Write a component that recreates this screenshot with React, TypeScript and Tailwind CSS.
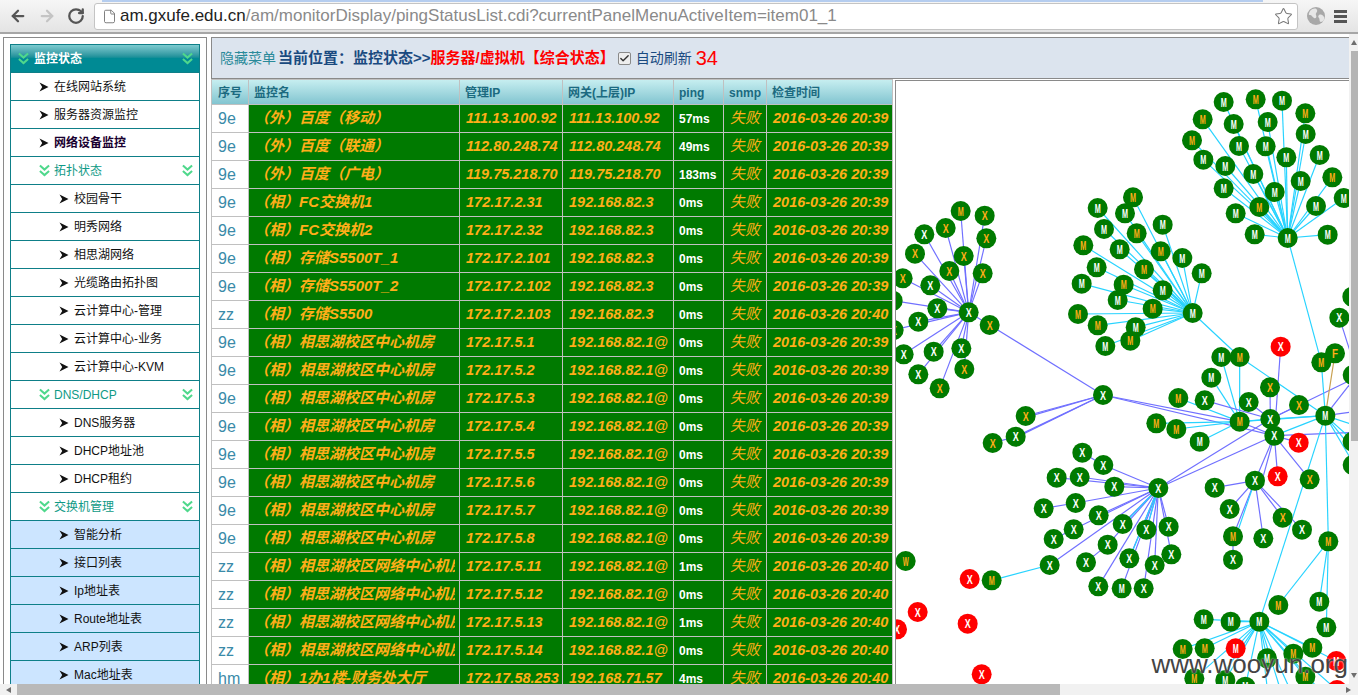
import { ArrowLeft, ArrowRight, RotateCw, File, Star, Check } from "lucide-react";

const FONT = { fontFamily: '"Liberation Sans", "Noto Sans CJK SC", sans-serif' };

type MenuItem = { label: string; level: 0 | 1 | 2; active?: boolean; blue?: boolean };

const menu: MenuItem[] = [
  { label: "在线网站系统", level: 1 },
  { label: "服务器资源监控", level: 1 },
  { label: "网络设备监控", level: 1, active: true },
  { label: "拓扑状态", level: 0 },
  { label: "校园骨干", level: 2 },
  { label: "明秀网络", level: 2 },
  { label: "相思湖网络", level: 2 },
  { label: "光缆路由拓扑图", level: 2 },
  { label: "云计算中心-管理", level: 2 },
  { label: "云计算中心-业务", level: 2 },
  { label: "云计算中心-KVM", level: 2 },
  { label: "DNS/DHCP", level: 0 },
  { label: "DNS服务器", level: 2 },
  { label: "DHCP地址池", level: 2 },
  { label: "DHCP租约", level: 2 },
  { label: "交换机管理", level: 0 },
  { label: "智能分析", level: 2, blue: true },
  { label: "接口列表", level: 2, blue: true },
  { label: "Ip地址表", level: 2, blue: true },
  { label: "Route地址表", level: 2, blue: true },
  { label: "ARP列表", level: 2, blue: true },
  { label: "Mac地址表", level: 2, blue: true },
];

const XS = "（相）相思湖校区中心机房";
const WL = "（相）相思湖校区网络中心机房";
const GW = "192.168.82.1@";
const T39 = "2016-03-26 20:39";
const T40 = "2016-03-26 20:40";

const rows = [
  ["9e", "（外）百度（移动）", "111.13.100.92", "111.13.100.92", "57ms", T39],
  ["9e", "（外）百度（联通）", "112.80.248.74", "112.80.248.74", "49ms", T39],
  ["9e", "（外）百度（广电）", "119.75.218.70", "119.75.218.70", "183ms", T39],
  ["9e", "（相）FC交换机1", "172.17.2.31", "192.168.82.3", "0ms", T39],
  ["9e", "（相）FC交换机2", "172.17.2.32", "192.168.82.3", "0ms", T39],
  ["9e", "（相）存储S5500T_1", "172.17.2.101", "192.168.82.3", "0ms", T39],
  ["9e", "（相）存储S5500T_2", "172.17.2.102", "192.168.82.3", "0ms", T39],
  ["zz", "（相）存储S5500", "172.17.2.103", "192.168.82.3", "0ms", T40],
  ["9e", XS, "172.17.5.1", GW, "0ms", T39],
  ["9e", XS, "172.17.5.2", GW, "0ms", T39],
  ["9e", XS, "172.17.5.3", GW, "0ms", T39],
  ["9e", XS, "172.17.5.4", GW, "0ms", T39],
  ["9e", XS, "172.17.5.5", GW, "0ms", T39],
  ["9e", XS, "172.17.5.6", GW, "0ms", T39],
  ["9e", XS, "172.17.5.7", GW, "0ms", T39],
  ["9e", XS, "172.17.5.8", GW, "0ms", T39],
  ["zz", WL, "172.17.5.11", GW, "1ms", T40],
  ["zz", WL, "172.17.5.12", GW, "0ms", T40],
  ["zz", WL, "172.17.5.13", GW, "1ms", T40],
  ["zz", WL, "172.17.5.14", GW, "0ms", T40],
  ["hm", "（相）1办1楼-财务处大厅", "172.17.58.253", "192.168.71.57", "4ms", T40],
];

const CYAN = "#27d3ff";
const BLUE = "#7070ff";

// graph coordinates are 3x page pixels, origin at page x=890, y=0
type Node = [number, number, string, "w" | "o" | "r"];
const LOW = 1035; // y offset for points read from the lower half

const low = (list: Node[]): Node[] => list.map(([x, y, l, c]) => [x, y + LOW, l, c]);

const hubA: Node = [1190, 714, "M", "w"];
const leavesA: Node[] = [
  [998, 306, "M", "w"], [1094, 298, "M", "o"], [1173, 302, "M", "w"], [1243, 340, "M", "o"],
  [935, 358, "M", "o"], [1028, 372, "M", "w"], [1130, 366, "M", "w"], [1244, 402, "M", "w"],
  [903, 421, "M", "o"], [1044, 438, "M", "w"], [1124, 439, "M", "w"], [1186, 472, "M", "w"],
  [1286, 465, "M", "w"], [937, 479, "M", "w"], [1003, 498, "M", "w"], [1087, 522, "M", "w"],
  [1229, 543, "M", "w"], [1324, 532, "M", "o"], [998, 565, "M", "w"], [1151, 576, "M", "w"],
  [1358, 594, "M", "w"], [1034, 640, "M", "w"], [1105, 621, "M", "o"], [1275, 618, "M", "w"],
  [1091, 703, "M", "w"], [1310, 704, "M", "w"],
];

const hubB: Node = [905, 939, "M", "w"];
const leavesB: Node[] = [
  [726, 592, "M", "o"], [620, 624, "M", "w"], [702, 640, "M", "w"], [639, 687, "M", "w"],
  [737, 700, "M", "o"], [815, 674, "M", "w"], [577, 736, "M", "o"], [686, 748, "M", "w"],
  [809, 754, "M", "o"], [874, 774, "M", "w"], [617, 802, "M", "w"], [759, 808, "M", "o"],
  [932, 820, "M", "w"], [572, 851, "M", "w"], [698, 854, "M", "o"], [815, 871, "M", "w"],
  [680, 900, "M", "w"], [785, 926, "M", "o"], [561, 942, "M", "o"], [620, 976, "M", "o"],
  [734, 982, "M", "w"], [718, 1022, "M", "o"], [643, 1038, "M", "w"],
];

const hubC: Node = [233, 937, "X", "w"];
const leavesC: Node[] = [
  [209, 633, "M", "o"], [281, 647, "X", "o"], [100, 703, "X", "w"], [164, 684, "X", "o"],
  [286, 715, "X", "o"], [72, 761, "X", "o"], [218, 768, "X", "o"], [275, 820, "X", "o"],
  [175, 813, "X", "o"], [35, 835, "X", "o"], [118, 856, "X", "w"], [5, 902, "X", "w"],
  [139, 925, "X", "w"], [82, 965, "X", "w"], [8, 990, "X", "w"], [128, 1055, "X", "w"],
  [211, 1045, "X", "w"], [38, 1063, "X", "w"], [82, 1123, "X", "w"], [220, 1107, "X", "o"],
  [146, 1165, "X", "o"],
];

const hubD: Node = [296, 975, "X", "o"];
const hubE: Node = [636, 150 + LOW, "X", "w"];
const leavesE: Node[] = low([[404, 213, "X", "o"], [374, 275, "X", "w"]]);

const hubG: Node = [802, 429 + LOW, "X", "w"];
const leavesG: Node[] = low([
  [637, 360, "X", "w"], [497, 398, "X", "w"], [566, 396, "X", "w"], [670, 425, "X", "w"],
  [554, 474, "X", "w"], [623, 511, "X", "w"], [695, 537, "X", "w"], [766, 554, "X", "w"],
  [833, 545, "X", "w"], [650, 599, "X", "w"], [715, 640, "X", "w"], [841, 628, "X", "w"],
  [791, 660, "X", "w"], [622, 724, "X", "w"], [692, 730, "M", "w"], [758, 730, "X", "w"],
  [476, 660, "X", "w"], [548, 553, "X", "w"],
]);
const outerG: Node[] = low([
  [574, 323, "X", "w"], [458, 490, "X", "w"], [488, 582, "X", "w"], [585, 652, "X", "w"],
]);

const hubF: Node = [1046, 230 + LOW, "M", "o"];
const leavesF: Node[] = low([
  [1046, 36, "M", "o"], [991, 36, "M", "w"], [961, 98, "M", "w"], [796, 235, "M", "o"],
  [856, 252, "M", "o"], [926, 290, "M", "w"], [862, 159, "M", "o"],
]);

const hubH: Node = [1138, 222 + LOW, "X", "w"];
const hubI: Node = [1150, 272 + LOW, "X", "w"];
const hubJ: Node = [1303, 212 + LOW, "M", "w"];
const hubK: Node = [1092, 407 + LOW, "X", "w"];
const leavesK: Node[] = low([
  [971, 428, "X", "w"], [1016, 492, "X", "w"], [1175, 518, "X", "o"], [1233, 554, "X", "w"],
  [1026, 574, "M", "o"], [1117, 580, "X", "w"],
]);

const hubL: Node = [1312, 589 + LOW, "M", "o"];
const hubM: Node = [1105, 830 + LOW, "M", "w"];
const leavesM: Node[] = low([
  [938, 823, "M", "w"], [1019, 830, "M", "w"], [875, 912, "M", "o"], [941, 910, "M", "o"],
  [1034, 910, "M", "r"], [1128, 940, "M", "w"], [1207, 926, "M", "o"], [1264, 908, "M", "o"],
  [1336, 948, "M", "r"], [910, 1000, "M", "o"], [1003, 1005, "M", "w"], [1063, 1025, "M", "w"],
  [1243, 995, "M", "o"], [1338, 1035, "M", "r"],
]);

const singles: Node[] = low([
  [305, 294, "X", "o"], [302, 706, "M", "o"], [236, 702, "X", "r"], [44, 648, "W", "o"],
  [80, 801, "X", "r"], [18, 853, "X", "r"], [230, 836, "X", "r"], [272, 988, "X", "r"],
  [1169, 5, "X", "r"], [941, 166, "X", "w"], [1073, 171, "X", "w"], [1137, 127, "X", "o"],
  [1224, 180, "X", "o"], [1291, 52, "M", "o"], [1332, 25, "F", "o"], [1223, 293, "X", "r"],
  [1160, 394, "X", "r"], [1256, 403, "X", "o"], [1026, 644, "X", "w"], [1162, 780, "M", "o"],
  [1285, 770, "M", "w"], [1306, 847, "M", "w"], [1345, -82, "X", "w"], [1384, -145, "X", "w"],
  [1385, 90, "X", "w"], [1385, 290, "X", "w"], [1385, 360, "M", "o"],
]);

type Edge = [number, number, number, number, string];

const fan = (hub: Node, leaves: Node[], color: string): Edge[] =>
  leaves.map((n) => [hub[0], hub[1], n[0], n[1], color]);

const pt = (x: number, y: number): Node => [x, y + LOW, "", "w"];

const edges: Edge[] = [
  ...fan(hubA, leavesA, CYAN),
  ...fan(hubB, leavesB, CYAN),
  ...fan(hubC, leavesC, BLUE),
  ...fan(hubC, [hubD], BLUE),
  ...fan(hubE, [hubD, ...leavesE, hubF, hubI], BLUE),
  ...fan(hubE, [pt(374, 278), pt(404, 217)], BLUE),
  ...fan(hubG, [...leavesG, hubH, hubI], BLUE),
  ...fan(hubG, [pt(766, 556), pt(715, 642), pt(695, 540)], CYAN),
  ...fan(hubF, leavesF, CYAN),
  ...fan(hubF, [hubJ, hubH], CYAN),
  ...fan(hubH, [pt(941, 166), pt(1073, 171), pt(1137, 127), pt(1224, 180), hubI], BLUE),
  ...fan(hubH, [hubJ], CYAN),
  ...fan(hubH, [pt(1390, 100)], BLUE),
  ...fan(hubI, [
    pt(1169, 5), pt(1223, 293), pt(1160, 394), pt(1256, 403), pt(1390, 262), hubK, pt(1115, 400), hubF,
  ], BLUE),
  ...fan(hubI, [hubJ], CYAN),
  ...fan(hubJ, [pt(1390, 100), pt(1390, 200)], BLUE),
  ...fan(hubJ, [pt(1291, 52), hubL, hubM, pt(1390, 290), pt(1390, 360), pt(1390, 240), pt(1390, 320)], CYAN),
  ...fan(hubJ, [pt(1332, 25)], "#c8a050"),
  ...fan(hubK, leavesK, BLUE),
  ...fan(hubK, [pt(1035, 574)], CYAN),
  [1026, 574 + LOW, 1026, 644 + LOW, BLUE],
  ...fan(hubL, [pt(1162, 780), pt(1285, 770), pt(1306, 847)], CYAN),
  ...fan(hubM, leavesM, CYAN),
  ...fan(hubM, [pt(960, 1040), pt(1130, 1040), pt(1170, 1040), pt(1200, 1040), pt(1290, 1040)], CYAN),
  [hubB[0], hubB[1], 1046, 36 + LOW, CYAN],
  [hubA[0], hubA[1], 1291, 52 + LOW, CYAN],
  [1046, 36 + LOW, 1303, 212 + LOW, CYAN],
  [374, 275 + LOW, 305, 294 + LOW, BLUE],
  [574, 323 + LOW, 637, 360 + LOW, BLUE],
  [458, 490 + LOW, 554, 474 + LOW, BLUE],
  [488, 582 + LOW, 548, 553 + LOW, BLUE],
  [585, 652 + LOW, 650, 599 + LOW, BLUE],
  [476, 660 + LOW, 302, 706 + LOW, CYAN],
  [1345, -82 + LOW, 1390, 60 + LOW, BLUE],
];

const nodes: Node[] = [
  ...leavesA, hubA, ...leavesB, hubB, ...leavesC, hubC, hubD, hubE, ...leavesE,
  ...outerG, ...leavesG, hubG, ...leavesF, hubF, hubH, hubI, hubJ, ...leavesK, hubK,
  hubL, ...leavesM, hubM, ...singles,
];

function TopologyGraph() {
  return (
    <svg viewBox="15 243 1362 1812" width="454" height="604" className="block" style={FONT}>
      {edges.map(([x1, y1, x2, y2, color], i) => (
        <line key={i} x1={x1} y1={y1} x2={x2} y2={y2} stroke={color} strokeWidth={3.5} />
      ))}
      {nodes.map(([x, y, label, tone], i) => (
        <g key={i}>
          <circle cx={x} cy={y} r={30} fill={tone === "r" ? "#ff0000" : "#007a00"} />
          <text
            x={x}
            y={y + 14}
            textAnchor="middle"
            fontSize={38}
            fontWeight={700}
            textLength={18}
            lengthAdjust="spacingAndGlyphs"
            fill={tone === "o" ? "#ffae1a" : "#ffffff"}
          >
            {label}
          </text>
        </g>
      ))}
    </svg>
  );
}

function DoubleChevron({ className }: { className: string }) {
  return (
    <svg viewBox="0 0 12 14" className={className} fill="none" stroke="#4fd88c" strokeWidth={2.2}>
      <path d="M1 1.5 6 6l5-4.5M1 7.5 6 12l5-4.5" />
    </svg>
  );
}

function Pointer() {
  return (
    <svg viewBox="0 0 10 10" className="h-[10px] w-[10px] shrink-0" fill="#111">
      <path d="M0.5 0.5 9.5 5 0.5 9.5 3.2 5Z" />
    </svg>
  );
}

function ScrollArrow({ dir }: { dir: "up" | "down" | "left" | "right" }) {
  const d = { up: "M0 5 3 0 6 5Z", down: "M0 0 3 5 6 0Z", left: "M5 0 0 3 5 6Z", right: "M0 0 5 3 0 6Z" }[dir];
  return (
    <svg viewBox="0 0 6 6" className="h-[6px] w-[6px]" fill="#6e6e6e">
      <path d={d} />
    </svg>
  );
}

function Sidebar() {
  return (
    <aside className="ml-[3px] w-[204px] shrink-0 border-x border-t border-[#8a8a8a] px-[6px] pt-[6px]">
      <div className="border-x border-t border-[#0e7f88]">
        <div className="flex h-[27px] items-center justify-between bg-gradient-to-b from-[#7ccbd0] via-[#008a94] to-[#008a94] pl-[7px] pr-[6px]">
          <DoubleChevron className="h-[13px] w-[11px]" />
          <span className="mr-auto ml-[5px] text-[12px] font-bold text-white">监控状态</span>
          <DoubleChevron className="h-[13px] w-[11px]" />
        </div>
        {menu.map((item) => (
          <div
            key={item.label}
            className={`flex h-[28px] items-center border-t border-[#0e7f88] text-[12px] ${
              item.blue ? "bg-[#cce5ff]" : "bg-white"
            } ${item.level === 2 ? "pl-[48px]" : "pl-[28px]"}`}
          >
            {item.level === 0 ? (
              <>
                <DoubleChevron className="h-[13px] w-[11px] shrink-0" />
                <span className="ml-[4px] text-[#0f9a86]">{item.label}</span>
                <DoubleChevron className="mr-[6px] ml-auto h-[13px] w-[11px] shrink-0" />
              </>
            ) : (
              <>
                <Pointer />
                <span className={`ml-[5px] ${item.active ? "font-bold text-[#1a0030]" : "text-[#111]"}`}>
                  {item.label}
                </span>
              </>
            )}
          </div>
        ))}
      </div>
    </aside>
  );
}

function StatusTable() {
  return (
    <table className="w-[681px] shrink-0 table-fixed border-collapse self-start">
      <colgroup>
        <col className="w-[37px]" />
        <col className="w-[211px]" />
        <col className="w-[103px]" />
        <col className="w-[111px]" />
        <col className="w-[50px]" />
        <col className="w-[43px]" />
        <col className="w-[126px]" />
      </colgroup>
      <thead>
        <tr className="h-[25px] bg-gradient-to-b from-[#c6eef0] to-[#7fc3cf] text-left text-[12px] font-bold text-[#1b6a80]">
          {["序号", "监控名", "管理IP", "网关(上层)IP", "ping", "snmp", "检查时间"].map((h) => (
            <th key={h} className="overflow-hidden border border-[#c0c0c0] pt-[1px] pl-[5px] font-bold whitespace-nowrap first:pl-[6px]">
              {h}
            </th>
          ))}
        </tr>
      </thead>
      <tbody>
        {rows.map((r, i) => (
          <tr key={i} className="h-[28px] bg-[#007a00] text-[14.5px] font-bold text-[#ffae1a] italic">
            <td className="border border-[#c0c0c0] bg-white pl-[6px] text-[16px] font-normal text-[#3a8aa8] not-italic">
              {r[0]}
            </td>
            <td className="border border-[#c0c0c0] pl-[5px] text-[15px]">
              <div className="w-[201px] overflow-hidden whitespace-nowrap">{r[1]}</div>
            </td>
            <td className="overflow-hidden border border-[#c0c0c0] pl-[6px] whitespace-nowrap">{r[2]}</td>
            <td className="overflow-hidden border border-[#c0c0c0] pl-[6px] whitespace-nowrap">{r[3]}</td>
            <td className="border border-[#c0c0c0] pl-[5px] text-[12px] text-white not-italic">{r[4]}</td>
            <td className="border border-[#c0c0c0] pl-[6px] text-[15px] font-normal">失败</td>
            <td className="overflow-hidden border border-[#c0c0c0] pl-[6px] whitespace-nowrap">{r[5]}</td>
          </tr>
        ))}
      </tbody>
    </table>
  );
}

function Toolbar() {
  return (
    <header className="relative flex h-[34px] shrink-0 items-center border-b-2 border-[#a6a6a6] bg-gradient-to-b from-[#f6f6f6] to-[#e4e4e4] pl-[9px]">
      <ArrowLeft size={18} strokeWidth={3} className="text-[#555]" />
      <ArrowRight size={18} strokeWidth={3} className="ml-[11px] text-[#c4c4c4]" />
      <RotateCw size={18} strokeWidth={3} className="ml-[11px] text-[#555]" />
      <div className="ml-[9px] flex h-[27px] w-[1204px] items-center rounded-[3px] border border-[#c4c4c4] bg-white pr-[4px] pl-[7px]">
        <File size={15} strokeWidth={1.5} className="text-[#777]" />
        <span className="ml-[3px] text-[17px] whitespace-nowrap text-[#8a8a8a]">
          <span className="text-[#222]">am.gxufe.edu.cn</span>
          /am/monitorDisplay/pingStatusList.cdi?currentPanelMenuActiveItem=item01_1
        </span>
        <Star size={19} strokeWidth={1.3} className="ml-auto text-[#777]" />
      </div>
      <svg viewBox="0 0 18 18" className="ml-[9px] h-[18px] w-[18px]">
        <circle cx="9" cy="9" r="9" fill="#a8a8a8" />
        <path d="M3 4c3-3 6-3 7-1s-2 3-1 5 0 4-2 3-2-3-4-3-1-2 0-4ZM12 8c2-1 4 0 5 2s-1 5-3 5-1-3-2-4-1-2 0-3Z" fill="#e6e6e6" />
      </svg>
      <div className="ml-[9px] flex w-[13px] flex-col gap-[2px]">
        <span className="h-[3px] bg-[#555]" />
        <span className="h-[3px] bg-[#555]" />
        <span className="h-[3px] bg-[#555]" />
      </div>
      <div className="absolute top-0 left-[102px] h-[2px] w-[1161px] bg-[#b5cdef]" />
    </header>
  );
}

export default function App() {
  return (
    <div className="flex h-[695px] w-[1358px] flex-col overflow-hidden bg-white" style={FONT}>
      <Toolbar />
      <div className="flex min-h-0 flex-1">
        <div className="flex min-h-0 min-w-0 flex-1 pt-[3px]">
          <Sidebar />
          <main className="ml-[4px] flex min-w-0 flex-1 flex-col">
            <div className="flex h-[42px] shrink-0 items-center border-y border-l border-[#8a8a8a] bg-[#dce4ee] pl-[8px]">
              <span className="text-[14px] text-[#2a8a9a]">隐藏菜单</span>
              <span className="ml-[2px] text-[15px] font-bold text-[#1a4a80]">当前位置：监控状态&gt;&gt;</span>
              <span className="text-[15px] font-bold text-[#ff0000]">服务器/虚拟机【综合状态】</span>
              <span className="mr-[5px] ml-[3px] flex h-[13px] w-[13px] items-center justify-center rounded-[2px] border border-[#8a8a8a] bg-[#eeeeee]">
                <Check size={11} strokeWidth={3} className="text-[#333]" />
              </span>
              <span className="text-[14px] text-[#1a4a80]">自动刷新</span>
              <span className="ml-[4px] text-[20px] leading-none text-[#ff0000]">34</span>
            </div>
            <div className="flex min-h-0 flex-1">
              <StatusTable />
              <div className="relative mt-[1px] ml-[2px] min-w-0 flex-1 overflow-hidden border-t border-l border-[#8a8a8a]">
                <TopologyGraph />
                <span className="absolute right-[1px] bottom-[7px] text-[26px] leading-none whitespace-nowrap text-[#444] [text-shadow:0_0_2px_#fff]">
                  www.wooyun.org
                </span>
              </div>
            </div>
          </main>
        </div>
        <div className="flex w-[9px] shrink-0 flex-col items-center bg-[#f1f1f1]">
          <div className="flex h-[17px] items-center">
            <ScrollArrow dir="up" />
          </div>
          <div className="h-[390px] w-[7px] self-end bg-[#b4b4b4]" />
          <div className="mt-auto flex h-[17px] items-center">
            <ScrollArrow dir="down" />
          </div>
        </div>
      </div>
      <div className="flex h-[11px] shrink-0 items-center bg-[#f1f1f1]">
        <div className="flex w-[17px] justify-center">
          <ScrollArrow dir="left" />
        </div>
        <div className="h-full w-[1043px] bg-[#b9b9b9]" />
        <div className="mr-[1px] ml-auto flex w-[17px] justify-center">
          <ScrollArrow dir="right" />
        </div>
      </div>
    </div>
  );
}
